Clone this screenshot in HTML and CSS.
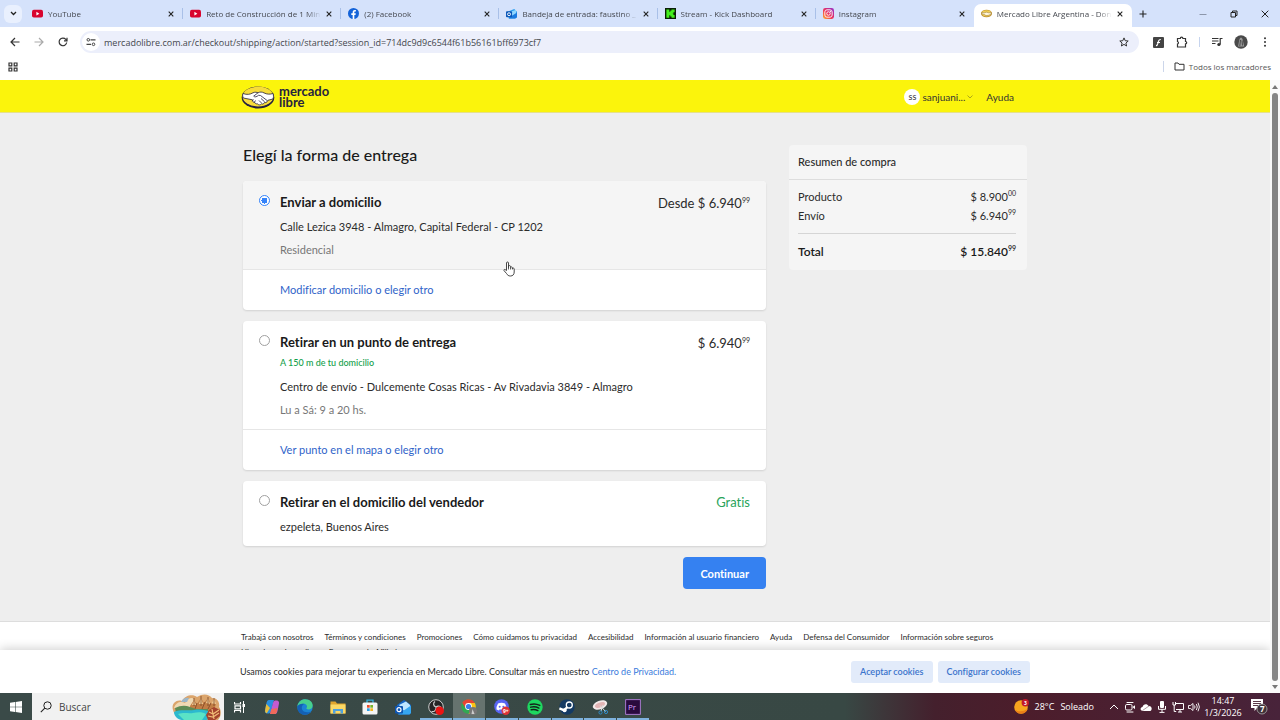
FILE: index.html
```html
<!DOCTYPE html>
<html lang="es">

<head>
    <meta charset="UTF-8">
    <meta name="viewport" content="width=device-width, initial-scale=1.0">
    <title>Mercado Libre Argentina</title>
    <link rel="stylesheet" href="styles.css">
</head>

<body>
    <!-- Pestañas -->
    <div class="tab-strip">
        <button class="tab-search" aria-label="Buscar pestañas">
            <svg width="7" height="5" viewBox="0 0 7 5"><path d="M1 1l2.5 2.5L6 1" fill="none" stroke="#222" stroke-width="1.3"/></svg>
        </button>
        <div class="tabs">
            <div class="tab">
                <svg class="favicon" viewBox="0 0 12 12"><rect y="2" width="12" height="8.4" rx="2" fill="#d8052f"/><path d="M4.8 4.2v4l3.2-2z" fill="#fff"/></svg>
                <span class="tab-title">YouTube</span>
                <button class="tab-close" aria-label="Cerrar"><svg viewBox="0 0 6 6"><path d="M.7.7l4.6 4.6M5.3.7L.7 5.3"/></svg></button>
            </div>
            <div class="tab">
                <svg class="favicon" viewBox="0 0 12 12"><rect y="2" width="12" height="8.4" rx="2" fill="#d8052f"/><path d="M4.8 4.2v4l3.2-2z" fill="#fff"/></svg>
                <span class="tab-title">Reto de Construcción de 1 Min</span>
                <button class="tab-close" aria-label="Cerrar"><svg viewBox="0 0 6 6"><path d="M.7.7l4.6 4.6M5.3.7L.7 5.3"/></svg></button>
            </div>
            <div class="tab">
                <svg class="favicon" viewBox="0 0 12 12"><circle cx="6" cy="6" r="6" fill="#1463d8"/><path d="M5.1 12V7.6H3.6V5.8h1.5V4.6c0-1.6 1-2.4 2.3-2.4l1.2.1v1.5h-.8c-.7 0-.9.4-.9.9v1.1h1.6l-.3 1.8H6.9V12z" fill="#fff"/></svg>
                <span class="tab-title">(2) Facebook</span>
                <button class="tab-close" aria-label="Cerrar"><svg viewBox="0 0 6 6"><path d="M.7.7l4.6 4.6M5.3.7L.7 5.3"/></svg></button>
            </div>
            <div class="tab">
                <svg class="favicon" viewBox="0 0 12 12"><path d="M2 4l7-3 3 3v6l-2 1.5H3z" fill="#2b9ff0"/><path d="M3 5l8-3v5L7 9z" fill="#8fd6ff"/><path d="M4 10l8-5v5l-2 1.5H3z" fill="#1b7ae0"/><rect y="3.6" width="6.6" height="6.4" rx="1" fill="#0b57b8"/><circle cx="3.3" cy="6.8" r="1.6" fill="none" stroke="#fff"/></svg>
                <span class="tab-title">Bandeja de entrada: faustino _</span>
                <button class="tab-close" aria-label="Cerrar"><svg viewBox="0 0 6 6"><path d="M.7.7l4.6 4.6M5.3.7L.7 5.3"/></svg></button>
            </div>
            <div class="tab">
                <svg class="favicon" viewBox="0 0 12 12"><rect width="12" height="12" fill="#0a1f06"/><path d="M1.5 1.5h3.2v2.6h1.1V2.8h1.3V1.5h3.4v3.2H9.2V6h-.9v.3h.9v1.2h1.3v3H7.1V9.3H5.8V8H4.7v2.5H1.5z" fill="#43ee1d"/></svg>
                <span class="tab-title">Stream - Kick Dashboard</span>
                <button class="tab-close" aria-label="Cerrar"><svg viewBox="0 0 6 6"><path d="M.7.7l4.6 4.6M5.3.7L.7 5.3"/></svg></button>
            </div>
            <div class="tab">
                <svg class="favicon" viewBox="0 0 12 12">
                    <defs><linearGradient id="insta" x1="0" y1="1" x2="1" y2="0"><stop offset="0" stop-color="#ffb52e"/><stop offset=".45" stop-color="#ef2f55"/><stop offset="1" stop-color="#8f2fd0"/></linearGradient></defs>
                    <rect width="12" height="12" rx="2.6" fill="url(#insta)"/><rect x="2" y="2" width="8" height="8" rx="2.3" fill="none" stroke="#fff"/><circle cx="6" cy="6" r="1.9" fill="none" stroke="#fff"/><circle cx="8.3" cy="3.7" r=".6" fill="#fff"/>
                </svg>
                <span class="tab-title">Instagram</span>
                <button class="tab-close" aria-label="Cerrar"><svg viewBox="0 0 6 6"><path d="M.7.7l4.6 4.6M5.3.7L.7 5.3"/></svg></button>
            </div>
            <div class="tab active">
                <svg class="favicon" viewBox="0 0 12 12"><ellipse cx="6" cy="6" rx="6" ry="4.2" fill="#b98a2c"/><ellipse cx="6" cy="5.8" rx="5.2" ry="3.4" fill="#f0cf55"/><path d="M1 5l2.5.3L6 4.5l2.5.8L11 5v1.8L8 8 5.500 8.300 3.500 7 1 6.500z" fill="#fff6dc" stroke="#8a6a2c" stroke-width=".5"/></svg>
                <span class="tab-title">Mercado Libre Argentina - Don</span>
                <button class="tab-close" aria-label="Cerrar"><svg viewBox="0 0 6 6"><path d="M.7.7l4.6 4.6M5.3.7L.7 5.3"/></svg></button>
            </div>
        </div>
        <button class="new-tab" aria-label="Nueva pestaña"><svg width="8" height="8" viewBox="0 0 8 8"><path d="M4 .5v7M.5 4h7" stroke="#222" stroke-width="1.1"/></svg></button>
        <div class="window-buttons">
            <button aria-label="Minimizar"><svg width="8" height="8" viewBox="0 0 8 8"><path d="M.5 4.500h7" stroke="#8c96aa"/></svg></button>
            <button aria-label="Restaurar"><svg width="8" height="8" viewBox="0 0 8 8"><path d="M1 2.500h4.500V7H1zM2.500 2.500V1H7v4.500H5.500" fill="none" stroke="#222"/></svg></button>
            <button aria-label="Cerrar ventana"><svg width="8" height="8" viewBox="0 0 8 8"><path d="M.7.7l6.600 6.600M7.300.7L.7 7.300" stroke="#222"/></svg></button>
        </div>
    </div>

    <!-- Barra de direcciones -->
    <div class="toolbar">
        <div class="nav-buttons">
            <button aria-label="Atrás"><svg width="10" height="10" viewBox="0 0 10 10"><path d="M9.500 5H1.200M5 1L1 5l4 4" fill="none" stroke="#333" stroke-width="1.200"/></svg></button>
            <button aria-label="Adelante"><svg width="10" height="10" viewBox="0 0 10 10"><path d="M.5 5h8.300M5 1l4 4-4 4" fill="none" stroke="#aaa" stroke-width="1.200"/></svg></button>
            <button aria-label="Recargar"><svg width="10" height="10" viewBox="0 0 10 10"><path d="M8.700 5.500A3.800 3.800 0 1 1 7.800 2.400L9 3.600M9 .8v3H6" fill="none" stroke="#333" stroke-width="1.200"/></svg></button>
        </div>
        <div class="address-bar">
            <button class="site-info" aria-label="Información del sitio"><svg width="10" height="10" viewBox="0 0 10 10"><path d="M4.500 2.800H9.500M.5 7.300h4.500" stroke="#444" stroke-width="1.200"/><circle cx="2.300" cy="2.800" r="1.300" fill="none" stroke="#444"/><circle cx="7.500" cy="7.300" r="1.300" fill="none" stroke="#444"/></svg></button>
            <input class="url" type="text" aria-label="Dirección" value="mercadolibre.com.ar/checkout/shipping/action/started?session_id=714dc9d9c6544f61b56161bff6973cf7">
            <button class="star" aria-label="Favorito"><svg width="10" height="10" viewBox="0 0 10 10"><path d="M5 .9l1.200 2.800 3 .3-2.300 2 .7 3L5 7.400 2.400 9l.7-3L.8 4l3-.3z" fill="none" stroke="#333"/></svg></button>
        </div>
        <div class="toolbar-icons">
            <button aria-label="Extensión"><svg width="11" height="11" viewBox="0 0 11 11"><rect width="11" height="11" rx="1" fill="#444"/><path d="M7.800 2.500C5.500 2.300 5.500 4 5 6S4 8.700 3 8.600M4 5.500h3" fill="none" stroke="#fff" stroke-width="1.100"/></svg></button>
            <button aria-label="Extensiones"><svg width="12" height="12" viewBox="0 0 12 12"><path d="M1.500 2.500h2.800a1.300 1.300 0 0 1 2.600 0h2.600v3a1.200 1.200 0 0 1 0 2.400V11h-8V8a1.300 1.300 0 0 0 0-2.500z" fill="none" stroke="#333" stroke-width="1.200"/></svg></button>
            <span class="divider"></span>
            <button aria-label="Contenido multimedia"><svg width="12" height="10" viewBox="0 0 12 10"><path d="M1 1.500h6.500M1 4h6.500M1 6.500h3.500M9.200 7.500V1.500H11.500" fill="none" stroke="#333" stroke-width="1.200"/><circle cx="7.900" cy="7.500" r="1.600" fill="#333"/></svg></button>
            <button aria-label="Perfil"><svg width="14" height="14" viewBox="0 0 14 14"><circle cx="7" cy="7" r="6.700" fill="#4a4a4a"/><path d="M4 11.500L5.500 4Q7 1 8.500 4l1.700 7.500z" fill="#999"/><path d="M6.500 5l-.7 6M8 5.500l.5 5" stroke="#333" stroke-width=".8"/></svg></button>
            <button aria-label="Menú"><svg width="4" height="10" viewBox="0 0 4 10"><g fill="#333"><circle cx="2" cy="1.300" r="1"/><circle cx="2" cy="5" r="1"/><circle cx="2" cy="8.700" r="1"/></g></svg></button>
        </div>
    </div>

    <div class="bookmarks">
        <button aria-label="Aplicaciones"><svg width="10" height="10" viewBox="0 0 10 10"><path d="M1 1h2.800v2.800H1zM6.200 1H9v2.800H6.200zM1 6.200h2.800V9H1zM6.200 6.200H9V9H6.200z" fill="none" stroke="#333" stroke-width="1.200"/></svg></button>
        <button class="all-bookmarks"><svg width="11" height="9" viewBox="0 0 11 9"><path d="M1 1h3l1 1.300h5V8H1z" fill="none" stroke="#333"/></svg>Todos los marcadores</button>
    </div>

    <!-- Página -->
    <div class="viewport">
        <div class="page">
            <header class="site-header">
                <div class="header-inner">
                    <a class="logo" href="#">
                        <svg width="34" height="24" viewBox="0 0 34 24">
                            <ellipse cx="17" cy="12.500" rx="16.300" ry="11" fill="#24213f"/>
                            <ellipse cx="17" cy="11.500" rx="15.400" ry="9.900" fill="#f7dc3a"/>
                            <path d="M2 8.500c4 1.500 7 1 10-.7 2-1 4-.5 5 0 2-1 4-1 6 .1 3 1.500 6 1.600 9 .6.700 2 .6 4-.1 5.500l-5 1.300c-1 2.700-3 2.400-3.500 2.300-.7 1.600-2.300 1.700-3 1.200-1 1.500-3 1.400-4 0-1.500.3-2.600-.5-2.700-1.600-1.600.1-2.600-1-2.200-2.400L2.300 13c-.7-1.500-.9-3-.3-4.500z" fill="#fff" stroke="#24213f" stroke-width=".8"/>
                            <path d="M17 7.800l-4.300 3.300c1 1.400 3 .8 4.800-.8l2 .2 7 5.300M20 13.500l3.700 3.400M18 15.500l2.600 2.600M12.500 14.500l-1.300 1.700M14.500 15.500l-1.300 2.100" fill="none" stroke="#24213f" stroke-width=".8"/>
                        </svg>
                        <span class="logo-text">mercado<br>libre</span>
                    </a>
                    <nav class="user-nav">
                        <a class="user" href="#">
                            <span class="avatar">ss</span>
                            <span>sanjuani...</span>
                            <svg class="chevron" width="6" height="4" viewBox="0 0 6 4"><path d="M.5.5L3 3 5.500.5" fill="none" stroke="#a29d1a" stroke-width=".9"/></svg>
                        </a>
                        <a href="#">Ayuda</a>
                    </nav>
                </div>
            </header>

            <main class="checkout">
                <form class="shipping">
                    <h1>Elegí la forma de entrega</h1>

                    <section class="card">
                        <div class="option selected">
                            <input type="radio" name="envio" id="domicilio" checked>
                            <div class="option-body">
                                <label class="option-title" for="domicilio">Enviar a domicilio</label>
                                <p>Calle Lezica 3948 - Almagro, Capital Federal - CP 1202</p>
                                <p class="muted">Residencial</p>
                            </div>
                            <span class="price">Desde $ 6.940<sup>99</sup></span>
                        </div>
                        <div class="card-link"><a href="#">Modificar domicilio o elegir otro</a></div>
                    </section>

                    <section class="card">
                        <div class="option">
                            <input type="radio" name="envio" id="punto">
                            <div class="option-body">
                                <label class="option-title" for="punto">Retirar en un punto de entrega</label>
                                <span class="note">A 150 m de tu domicilio</span>
                                <p>Centro de envío - Dulcemente Cosas Ricas - Av Rivadavia 3849 - Almagro</p>
                                <p class="muted">Lu a Sá: 9 a 20 hs.</p>
                            </div>
                            <span class="price">$ 6.940<sup>99</sup></span>
                        </div>
                        <div class="card-link"><a href="#">Ver punto en el mapa o elegir otro</a></div>
                    </section>

                    <section class="card">
                        <div class="option">
                            <input type="radio" name="envio" id="vendedor">
                            <div class="option-body">
                                <label class="option-title" for="vendedor">Retirar en el domicilio del vendedor</label>
                                <p>ezpeleta, Buenos Aires</p>
                            </div>
                            <span class="price free">Gratis</span>
                        </div>
                    </section>

                    <button class="continue" type="button">Continuar</button>
                </form>

                <aside class="summary">
                    <h2>Resumen de compra</h2>
                    <dl>
                        <div class="row"><dt>Producto</dt><dd>$ 8.900<sup>00</sup></dd></div>
                        <div class="row"><dt>Envío</dt><dd>$ 6.940<sup>99</sup></dd></div>
                        <div class="row total"><dt>Total</dt><dd>$ 15.840<sup>99</sup></dd></div>
                    </dl>
                </aside>
            </main>

            <footer class="site-footer">
                <nav class="footer-links">
                    <a href="#">Trabajá con nosotros</a>
                    <a href="#">Términos y condiciones</a>
                    <a href="#">Promociones</a>
                    <a href="#">Cómo cuidamos tu privacidad</a>
                    <a href="#">Accesibilidad</a>
                    <a href="#">Información al usuario financiero</a>
                    <a href="#">Ayuda</a>
                    <a href="#">Defensa del Consumidor</a>
                    <a href="#">Información sobre seguros</a>
                    <a href="#">Libro de quejas online</a>
                    <a href="#">Programa de Afiliados</a>
                </nav>
            </footer>

            <div class="cookie-banner">
                <div class="cookie-inner">
                    <p>Usamos cookies para mejorar tu experiencia en Mercado Libre. Consultar más en nuestro <a href="#">Centro de Privacidad.</a></p>
                    <button type="button">Aceptar cookies</button>
                    <button type="button">Configurar cookies</button>
                </div>
            </div>

            <svg class="pointer" width="12" height="16" viewBox="0 0 12 16"><path d="M3.500 9.500V2a1 1 0 0 1 2 0v4.500-1a1 1 0 0 1 2 .2v.8a1 1 0 0 1 1.900.2v.8a1 1 0 0 1 1.800.3V11c0 2.500-1.400 4-3.700 4-2 0-3-.8-4-2.500L1 9.600c-.5-1 .7-1.500 1.300-.9z" fill="#fff" stroke="#333" stroke-width=".9"/><path d="M5.500 6v2.500M7.500 6.500v2M9.400 7v1.500" stroke="#333" stroke-width=".8"/></svg>
        </div>

        <div class="scrollbar">
            <svg width="6" height="4" viewBox="0 0 6 4"><path d="M0 4l3-4 3 4z" fill="#777"/></svg>
            <div class="thumb"></div>
            <svg width="6" height="4" viewBox="0 0 6 4"><path d="M0 0l3 4 3-4z" fill="#777"/></svg>
        </div>
    </div>

    <!-- Barra de tareas -->
    <div class="taskbar">
        <button class="start" aria-label="Inicio"><svg width="12" height="12" viewBox="0 0 12 12"><path d="M0 1.700l5-.7v4.700H0zM5.600.9L12 0v5.700H5.600zM0 6.300h5V11l-5-.7zM5.600 6.300H12V12l-6.400-.9z" fill="#fff"/></svg></button>
        <label class="search-box">
            <svg width="12" height="12" viewBox="0 0 12 12"><circle cx="7.500" cy="4.500" r="3.700" fill="none" stroke="#222"/><path d="M4.800 7.200L.8 11.200" stroke="#222" stroke-width="1.100"/></svg>
            <input type="text" placeholder="Buscar" aria-label="Buscar">
            <svg class="search-art" width="50" height="26" viewBox="0 0 50 26">
                <path d="M1 16c-2-6 3-11 9-9 3-6 11-7 15-4 6-4 12-3 15 1 6 0 8 5 7 9 3 4 2 10-1 13H10c-3-3-8-5-9-10z" fill="#dba56c"/>
                <path d="M2 14c2-6 7-7 11-5 3-5 7-6 9-4l-2 10z" fill="#efd9b4"/>
                <path d="M9 8q3-5 8-4l-2 4z" fill="#9bb6c9"/>
                <path d="M18 12l4-6 3 4 4-6 3 5 4-5 3 6 5 0-2 6-7 2-17-1z" fill="#c27e45"/>
                <path d="M20 11l2-5 2 5zM27 10l2-6 2 6zM34 9l2-5 2 6zM40 9l2-4 2 5z" fill="#f4d29c"/>
                <path d="M22 4v8M29 2v10M36 3v9M42 4v8M25 9l-2 6M33 8l-3 7M39 9l-3 6" stroke="#7c4424" stroke-width=".8"/>
                <path d="M3 14q8-4 15-1l6 2h12v4H4z" fill="#5d8c55"/>
                <path d="M2 18c6-3 14-1 20-2s13 0 16 2-1 8-4 8H10c-4 0-8-4-8-8z" fill="#2cb9cf"/>
                <path d="M6 20c7-2 10 0 15-1s10-1 13 1l-4 6H12z" fill="#5be3c6"/>
                <path d="M37 16l5-3 6 3v6l-5 4h-7l-2-5z" fill="#a4432d"/>
                <path d="M37 18l4 2 6-4M36 22l5 1 6-4M40 15l2 10" fill="none" stroke="#f0bd76" stroke-width="1.200"/>
            </svg>
        </label>
        <button class="task-view" aria-label="Vista de tareas"><svg width="12" height="12" viewBox="0 0 12 12"><path d="M.5 1v2h6V1M1 4.800h5.500v3H1zM.5 11.500v-2h6v2" fill="none" stroke="#fff" stroke-width="1.200"/><path d="M9.500 0v12" stroke="#fff"/><rect x="8.500" y="3" width="2.500" height="3" fill="#fff"/></svg></button>
        <div class="apps">
            <button aria-label="Copilot"><svg viewBox="0 0 16 16"><path d="M5 1h5l-3 11c-.5 2-1.500 2.500-3 2.500-3 0-3.500-1.500-2.700-4.500l1-5C2.800 2.500 3.500 1 5 1z" fill="#2a8fe0"/><path d="M2.300 5L1.300 10c-.6 2.600 0 3.800 1.500 4.300L6 9z" fill="#e7bd3c"/><path d="M11 15H6l3-11c.5-2 1.500-2.500 3-2.500 3 0 3.500 1.500 2.700 4.500l-1 5c-.5 2.500-1.200 4-2.700 4z" fill="#c45bd0"/><path d="M11 15H6l1.500-5 6-1-.3 2c-.5 2.500-1 4-2.200 4z" fill="#ef6a5a"/></svg></button>
            <button aria-label="Edge"><svg viewBox="0 0 16 16"><circle cx="8" cy="8" r="7.700" fill="#1b84d4"/><path d="M.4 7.500C1 3 4.300.3 8.300.3c4.500 0 7.400 3 7.400 6.200 0 2.500-2 3.900-4.200 3.900-1.700 0-2.400-.6-2-1.300C11 6.700 9 4.800 6.300 4.800 3.500 4.800 1 6.200.4 7.500z" fill="#47cf8e"/><path d="M.4 7.500C2 4.800 5 4.200 7.500 5.100 4.500 6 4 9.200 5.800 11.600c1.500 2 5.200 2.200 8.200.8-2 2.800-5.500 4-8.700 3C2 14.200 0 11.300.4 7.500z" fill="#1460b4"/></svg></button>
            <button aria-label="Explorador"><svg viewBox="0 0 16 16"><path d="M.5 2.500h5l1.500 2h8.500v10H.5z" fill="#e2a52c"/><path d="M.5 5.500h15v9H.5z" fill="#fbd866"/><path d="M3 14.500V10h10v4.500h-2.500V12h-5v2.500z" fill="#4fa0dc"/></svg></button>
            <button aria-label="Microsoft Store"><svg viewBox="0 0 16 16"><path d="M5 4V1.200h6V4" fill="none" stroke="#35b3dd" stroke-width="1.300"/><rect x=".5" y="3.500" width="15" height="12" rx="1.500" fill="#f4f4f4"/><path d="M5 6h2.700v2.700H5z" fill="#ea4a2a"/><path d="M8.300 6H11v2.700H8.300z" fill="#77b52b"/><path d="M5 9.300h2.700V12H5z" fill="#2a9ee4"/><path d="M8.300 9.300H11V12H8.300z" fill="#f5b51f"/></svg></button>
            <button aria-label="Outlook"><svg viewBox="0 0 16 16"><path d="M2 6l7-5 7 5v8l-1.500 1.500h-11L2 14z" fill="#1565c4"/><path d="M4 6l7-3.500L15 6v3l-6 3z" fill="#bfe6ff"/><path d="M3 15.500L16 6.500V14l-1.500 1.500z" fill="#36a6f0"/><rect y="7" width="8" height="7.500" rx="1" fill="#0d55b2"/><circle cx="4" cy="10.700" r="2" fill="none" stroke="#fff" stroke-width="1.200"/></svg></button>
            <button class="open" aria-label="OBS"><svg viewBox="0 0 16 16"><circle cx="8" cy="8" r="7.300" fill="#242424" stroke="#ddd" stroke-width=".9"/><path d="M8 8c-3-1-3-4-1-5.500M8 8c2.500-2 5-.5 5.500 1.500M8 8c.5 3-1.500 5-4.500 4.500" fill="none" stroke="#ccc" stroke-width="1.200"/><circle cx="11.700" cy="11.700" r="4.300" fill="#ec1414"/></svg></button>
            <button class="open current" aria-label="Chrome"><svg viewBox="0 0 16 16"><circle cx="7.500" cy="7.500" r="7.300" fill="#32a852"/><path d="M1.200 3.800A7.300 7.300 0 0 1 13.900 4H7.500L4.400 9.300z" fill="#e84335"/><path d="M13.900 4A7.300 7.300 0 0 1 7.500 14.800L10.700 9.300 7.500 4z" fill="#fbc116"/><circle cx="7.500" cy="7.500" r="3.400" fill="#fff"/><circle cx="7.500" cy="7.500" r="2.600" fill="#3b7ded"/><circle cx="12" cy="12" r="4" fill="#777"/><path d="M10.500 15l1-5 2 5z" fill="#ccc"/></svg></button>
            <button class="open" aria-label="Discord"><svg viewBox="0 0 16 16"><circle cx="7.500" cy="7.500" r="7.300" fill="#5865f2"/><path d="M4 4.500q3.500-1.500 7 0 1.800 3 1.500 6l-2.500 1-.7-1.200q-2 .5-3.600 0L5 11.500l-2.500-1Q2.200 7.500 4 4.500z" fill="#fff"/><circle cx="5.700" cy="7.700" r="1" fill="#5865f2"/><circle cx="9.300" cy="7.700" r="1" fill="#5865f2"/><circle cx="11.700" cy="11.700" r="4.200" fill="#dd3436"/><text x="8.900" y="13.900" class="badge-text">9+</text></svg></button>
            <button class="open" aria-label="Spotify"><svg viewBox="0 0 16 16"><circle cx="8" cy="8" r="7.700" fill="#1ed760"/><path d="M3.300 5.500q5-1.400 9.500.9M3.700 8.200q4.300-1.200 8.200.9M4.200 10.800q3.500-.9 6.700.8" fill="none" stroke="#14231a" stroke-width="1.400" stroke-linecap="round"/></svg></button>
            <button class="open" aria-label="Steam"><svg viewBox="0 0 16 16"><circle cx="8" cy="8" r="7.700" fill="#143a63"/><path d="M.4 9.300l4.800 2 3.600-3.800" fill="none" stroke="#fff" stroke-width="2.400"/><circle cx="10.300" cy="6" r="3" fill="#143a63" stroke="#fff" stroke-width="1.300"/><circle cx="5.600" cy="11.300" r="2" fill="#fff"/></svg></button>
            <button class="open" aria-label="Recortes"><svg viewBox="0 0 16 16"><ellipse cx="8" cy="6" rx="7.500" ry="4.300" transform="rotate(-20 8 6)" fill="#f3e8e8"/><ellipse cx="8" cy="6" rx="5.300" ry="2.500" transform="rotate(-20 8 6)" fill="#e3b4b4"/><path d="M8 6.500l5.500 6M11 6l-2 6" stroke="#dcdcdc"/><circle cx="8.500" cy="13.500" r="1.600" fill="none" stroke="#2f88c4"/><circle cx="14" cy="13" r="1.600" fill="none" stroke="#2f88c4"/></svg></button>
            <button class="open" aria-label="Premiere Pro"><svg viewBox="0 0 16 16"><rect x=".7" y=".7" width="14.600" height="14.600" fill="#2a0a3e" stroke="#c48af0" stroke-width=".8"/><text x="3" y="11" class="pr-text">Pr</text></svg></button>
        </div>

        <div class="tray">
            <button class="weather"><svg width="15" height="15" viewBox="0 0 15 15"><circle cx="7" cy="8" r="6.800" fill="#f7a51e"/><path d="M1 11a6.800 6.800 0 0 0 12.500-1q-6 4-12.500 1z" fill="#ea7f18"/><circle cx="11.300" cy="3.700" r="3.700" fill="#c3182b"/><text x="10" y="6" class="badge-text">3</text></svg><span>28°C</span><span>Soleado</span></button>
            <div class="tray-icons">
                <svg viewBox="0 0 12 12"><path d="M2 8l4-4 4 4" fill="none" stroke="#fff"/></svg>
                <svg viewBox="0 0 12 12"><path d="M3 1.500h6M3 11h6" stroke="#fff" stroke-linecap="round"/><rect x="1.500" y="3.500" width="6.500" height="5.500" rx="1.300" fill="none" stroke="#fff"/><path d="M8.500 6l2.500-1.700v4z" fill="#fff"/></svg>
                <svg viewBox="0 0 12 12"><path d="M3 10C0 10-.2 6.500 2.500 6 3 3 7 2 8.500 5c4-.3 4.200 5 .8 5z" fill="#fff"/><path d="M2.500 9.500L9 5" stroke="#9a8088" stroke-width=".8"/></svg>
                <svg viewBox="0 0 12 12"><rect x="4" y="0" width="4" height="7" rx="1" fill="#fff"/><path d="M2.500 5v3.300h7V5M6 8v3M3.500 11.400h5" fill="none" stroke="#fff"/></svg>
                <svg viewBox="0 0 12 12"><path d="M4 2.500h7.500v6H4M6 11h4M8 8.500V11M1 1v3h2.500V1M2.200 4v6.500h2" fill="none" stroke="#fff"/></svg>
                <svg viewBox="0 0 12 12"><path d="M.5 4.500h2l2.500-2v7l-2.500-2h-2zM6.500 4.500q1 1.500 0 3M8.300 3q2 3 0 6M10 1.700q2.800 4.300 0 8.600" fill="none" stroke="#fff" stroke-width=".9"/></svg>
            </div>
            <div class="clock"><span>14:47</span><span>1/3/2026</span></div>
            <button class="notifications" aria-label="Notificaciones"><svg width="17" height="17" viewBox="0 0 17 17"><path d="M0 1h12v9H6l-2.500 3v-3H0z" fill="#fff"/><path d="M2 3.500h8M2 5.500h8M2 7.500h5" stroke="#4b2535" stroke-width=".9"/><circle cx="11" cy="11" r="5" fill="#3f3038" stroke="#aaa" stroke-width=".8"/><text x="8.900" y="14" class="count-text">7</text></svg></button>
        </div>
    </div>
</body>

</html>
```
FILE: styles.css
```css
* {
    box-sizing: border-box;
}

body {
    margin: 0;
    height: 100vh;
    display: flex;
    flex-direction: column;
    overflow: hidden;
    background: #fff;
    font-family: "Open Sans", "Noto Sans", sans-serif;
    font-size: 8px;
    color: #333;
}

button {
    display: flex;
    align-items: center;
    justify-content: center;
    margin: 0;
    padding: 0;
    border: none;
    background: none;
    font: inherit;
    color: inherit;
    cursor: pointer;
}

input {
    font: inherit;
    color: inherit;
}

a {
    color: inherit;
    text-decoration: none;
}

h1, h2, p, dl, dd {
    margin: 0;
}

svg {
    flex: none;
}

/* Pestañas */
.tab-strip {
    flex: none;
    height: 27px;
    display: flex;
    align-items: center;
    background: #d5e2fb;
}

.tab-search {
    width: 18px;
    height: 18px;
    margin: 0 3px 0 4px;
    border-radius: 6px;
    background: #e9f0fe;
}

.tabs {
    flex: 1;
    height: 23px;
    display: grid;
    grid-template-columns: repeat(7, 1fr);
    align-self: flex-end;
}

.tab {
    display: flex;
    align-items: center;
    gap: 5px;
    min-width: 0;
    padding: 0 9px 4px 7px;
    position: relative;
}

.tab::after {
    content: "";
    position: absolute;
    right: 0;
    top: 4px;
    width: 1px;
    height: 11px;
    background: #a9c0e8;
}

.tab.active {
    background: #fff;
    border-radius: 7px 7px 0 0;
}

.tab.active::after,
.tab:nth-last-child(2)::after {
    display: none;
}

.favicon {
    width: 11px;
    height: 11px;
}

.tab-title {
    flex: 1;
    overflow: hidden;
    white-space: nowrap;
    color: #45484f;
    mask-image: linear-gradient(to right, #000 88%, transparent);
}

.tab-close svg {
    width: 6px;
    height: 6px;
    stroke: #222;
    stroke-width: 1.1;
}

.new-tab {
    width: 22px;
    height: 18px;
}

.window-buttons {
    display: flex;
    margin-left: 33px;
}

.window-buttons button {
    width: 31px;
    height: 20px;
}

/* Barra de direcciones */
.toolbar {
    flex: none;
    height: 30px;
    display: flex;
    align-items: center;
    padding-right: 7px;
}

.nav-buttons {
    display: flex;
    padding-left: 3px;
}

.nav-buttons button {
    width: 24px;
    height: 22px;
}

.address-bar {
    flex: 1;
    height: 22px;
    display: flex;
    align-items: center;
    margin-left: 5px;
    padding: 0 8px 0 2px;
    border-radius: 11px;
    background: #eceffb;
}

.site-info {
    width: 18px;
    height: 18px;
    border-radius: 50%;
    background: #fff;
}

.url {
    flex: 1;
    min-width: 0;
    padding: 0 0 0 4px;
    border: none;
    outline: none;
    background: none;
    font-size: 9px;
    color: #44474d;
}

.star {
    width: 14px;
    height: 14px;
}

.toolbar-icons {
    display: flex;
    align-items: center;
    margin-left: 7px;
}

.toolbar-icons button {
    width: 24px;
    height: 22px;
}

.toolbar-icons .divider {
    width: 1px;
    height: 10px;
    margin: 0 5px;
    background: #c6d4ee;
}

.toolbar-icons button:last-child {
    width: 16px;
    margin-left: 4px;
}

.bookmarks {
    flex: none;
    height: 23px;
    display: flex;
    align-items: center;
    justify-content: space-between;
    padding: 0 9px 4px 8px;
}

.all-bookmarks {
    gap: 4px;
    padding-left: 10px;
    border-left: 1px solid #ccd6ea;
    color: #555;
}

/* Página */
.viewport {
    flex: 1;
    min-height: 0;
    display: flex;
}

.page {
    flex: 1;
    position: relative;
    overflow: hidden;
    background: #eee;
    font-family: Lato, sans-serif;
    font-size: 11px;
    font-variant-ligatures: none;
    color: #2b2b2b;
}

.scrollbar {
    width: 10px;
    display: flex;
    flex-direction: column;
    align-items: center;
    padding: 5px 0 4px;
    gap: 4px;
    background: #fafafa;
}

.thumb {
    flex: 1;
    width: 6px;
    border-radius: 3px;
    background: #858585;
}

.site-header {
    height: 33px;
    background: #fbf40c;
    border-bottom: 1px solid #e6e08a;
}

.header-inner {
    display: flex;
    align-items: center;
    justify-content: space-between;
    max-width: 788px;
    height: 33px;
    margin: 0 auto;
    padding-right: 15px;
}

.logo {
    display: flex;
    align-items: center;
    gap: 4px;
}

.logo-text {
    font-size: 13px;
    font-weight: bold;
    line-height: 11px;
    color: #26233f;
}

.user-nav {
    display: flex;
    align-items: center;
    gap: 13px;
    font-size: 10px;
    color: #333;
}

.user {
    display: flex;
    align-items: center;
    gap: 2px;
}

.avatar {
    width: 16px;
    height: 16px;
    border-radius: 50%;
    background: #fff;
    font-size: 9px;
    line-height: 15px;
    text-align: center;
}

.checkout {
    display: grid;
    grid-template-columns: 1fr 238px;
    align-items: start;
    gap: 23px;
    max-width: 784px;
    margin: 0 auto;
    padding: 32px 0;
}

.shipping {
    display: flex;
    flex-direction: column;
    gap: 11px;
}

h1 {
    margin-bottom: 5px;
    font-size: 16px;
    font-weight: 500;
    line-height: 20px;
    color: #1a1a1a;
}

.card {
    border-radius: 4px;
    background: #fff;
    box-shadow: 0 1px 2px rgba(0, 0, 0, 0.12);
    overflow: hidden;
}

.option {
    display: flex;
    align-items: flex-start;
    gap: 10px;
    padding: 11px 16px 8px;
}

.option.selected {
    background: #f5f5f5;
}

.option input {
    appearance: none;
    flex: none;
    width: 11px;
    height: 11px;
    margin: 3px 0 0;
    border: 1px solid #a0a0a0;
    border-radius: 50%;
    background: #fff;
}

.option input:checked {
    border-color: #3483fa;
    background: radial-gradient(circle, #3483fa 3px, #fff 3px);
}

.option-body {
    flex: 1;
}

.option-title {
    display: block;
    font-size: 13px;
    font-weight: 700;
    line-height: 20px;
    color: #1a1a1a;
}

.option-body p {
    line-height: 23px;
}

.option-title + p {
    margin-top: 3px;
}

.note + p {
    margin-top: 2px;
}

.option-body .muted {
    color: #777;
}

.note {
    display: block;
    font-size: 9px;
    font-weight: 500;
    line-height: 21px;
    color: #14a04b;
}

.price {
    font-size: 13px;
    line-height: 22px;
}

sup {
    font-size: 7px;
    line-height: 1;
    vertical-align: 5px;
}

.price.free {
    line-height: 20px;
    color: #28a35a;
}

.card-link {
    padding-left: 37px;
    border-top: 1px solid #e6e6e6;
    line-height: 40px;
    color: #2f63c9;
}

.continue {
    align-self: flex-end;
    height: 32px;
    padding: 0 17px;
    border-radius: 4px;
    background: #3581f1;
    font-weight: bold;
    color: #fff;
}

.summary {
    border-radius: 4px;
    background: #f5f5f5;
}

.summary h2 {
    padding: 0 9px;
    border-bottom: 1px solid #ddd;
    font-size: 11px;
    font-weight: 500;
    line-height: 34px;
}

.summary dl {
    padding: 7px 11px 9px 9px;
}

.row {
    display: flex;
    justify-content: space-between;
    line-height: 19px;
}

.total {
    margin-top: 8px;
    padding-top: 8px;
    border-top: 1px solid #d5d5d5;
    font-size: 12px;
    font-weight: 600;
    color: #1a1a1a;
}

.site-footer {
    height: 100%;
    border-top: 1px solid #ddd;
    background: #fff;
}

.footer-links {
    display: flex;
    flex-wrap: wrap;
    gap: 0 11px;
    max-width: 788px;
    margin: 0 auto;
    padding-top: 8px;
    font-size: 8px;
    line-height: 15px;
}

.cookie-banner {
    position: absolute;
    left: 0;
    right: 0;
    bottom: 0;
    background: #fff;
    box-shadow: 0 -1px 10px rgba(0, 0, 0, 0.2);
}

.cookie-inner {
    display: flex;
    align-items: center;
    gap: 5px;
    max-width: 790px;
    height: 43px;
    margin: 0 auto;
    font-size: 9px;
}

.cookie-inner p {
    flex: 1;
}

.cookie-inner p a {
    color: #3a7bdc;
}

.cookie-inner button {
    height: 22px;
    padding: 0 9px;
    border-radius: 3px;
    background: #e2ebfa;
    font-weight: 600;
    color: #3a73cc;
}

.pointer {
    position: absolute;
    left: 503px;
    top: 181px;
}

/* Barra de tareas */
.taskbar {
    flex: none;
    height: 27px;
    display: flex;
    align-items: stretch;
    background: linear-gradient(to right, #3a4a48 0%, #384844 66%, #44202d 73%, #4c1d2b 80%, #48233a 100%);
    font-size: 9px;
    color: #fff;
}

.start {
    width: 32px;
}

.search-box {
    width: 192px;
    display: flex;
    align-items: center;
    padding-left: 8px;
    background: #f1f1f1;
}

.search-box input {
    flex: 1;
    min-width: 0;
    padding: 0 0 0 7px;
    border: none;
    outline: none;
    background: none;
    font-size: 10px;
}

.search-box input::placeholder {
    color: #444;
}

.search-art {
    margin-right: 2px;
}

.task-view {
    width: 32px;
}

.apps {
    width: 393px;
    display: grid;
    grid-template-columns: repeat(12, 1fr);
    gap: 1px;
}

.apps svg {
    width: 16px;
    height: 16px;
}

.apps .open {
    border-bottom: 2px solid #7fb2de;
    padding-top: 2px;
}

.apps .current {
    background: #66736f;
}

.badge-text {
    font: bold 5px "Open Sans", sans-serif;
    fill: #fff;
}

.pr-text {
    font: 8px "Open Sans", sans-serif;
    fill: #dba6ff;
}

.count-text {
    font: bold 8px "Open Sans", sans-serif;
    fill: #fff;
}

.tray {
    margin-left: auto;
    display: flex;
    align-items: center;
    padding-right: 12px;
}

.weather {
    gap: 6px;
}

.tray-icons {
    display: flex;
    gap: 4px;
    margin-left: 14px;
}

.tray-icons svg {
    width: 12px;
    height: 12px;
}

.clock {
    width: 46px;
    display: flex;
    flex-direction: column;
    align-items: center;
    line-height: 12px;
}

.notifications {
    margin-left: 5px;
}
```
